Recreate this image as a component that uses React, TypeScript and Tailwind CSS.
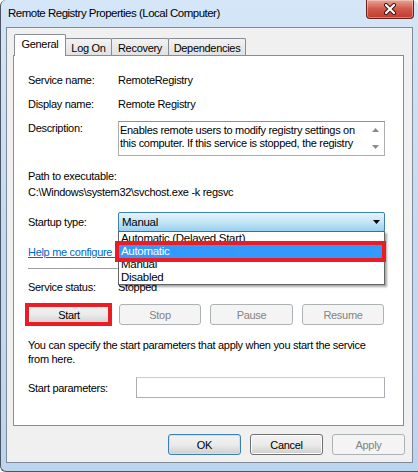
import React from "react";

const body = { fontFamily: '"Liberation Sans", Arial, sans-serif' };

function Btn({ label, w = "w-[82px]", disabled = false, focus = false }: { label: string; w?: string; disabled?: boolean; focus?: boolean }) {
  const base = "flex h-[21px] items-center justify-center rounded-[3px] border text-[11px]";
  if (disabled) {
    return <div className={`${base} ${w} border-[#adb2b5] bg-[#f4f4f4] text-[#838383]`}>{label}</div>;
  }
  return (
    <div
      className={`${base} ${w} ${
        focus ? "border-[#3c7fb1] shadow-[inset_0_0_0_1px_#bde6fd]" : "border-[#707070] shadow-[inset_0_0_0_1px_#fcfcfc]"
      } bg-gradient-to-b from-[#f2f2f2] via-[#ebebeb] to-[#cfcfcf] text-black`}
    >
      {label}
    </div>
  );
}

function Row({ label, children, className = "" }: { label: string; children: React.ReactNode; className?: string }) {
  return (
    <div className={`flex ${className}`}>
      <div className="w-[90px] shrink-0">{label}</div>
      <div className="flex-1">{children}</div>
    </div>
  );
}

export default function App() {
  const tabs = [
    ["Log On", "w-[47px]"],
    ["Recovery", "w-[58px]"],
    ["Dependencies", "w-[78px]"],
  ];

  return (
    <div
      className="flex h-[472px] w-[418px] flex-col overflow-hidden rounded-t-[6px] rounded-bl-[6px] border-b border-l border-[#4b5563] bg-gradient-to-b from-[#d4e6f7] via-[#c3daf2] to-[#bcd5ee]"
      style={body}
    >
      {/* title bar */}
      <div className="flex h-[27px] shrink-0 items-start justify-between">
        <div className="pl-[7px] pt-[5px] text-[11.5px] leading-[16px] tracking-[-0.5px] text-black">
          Remote Registry Properties (Local Computer)
        </div>
        <div className="mr-[4px] flex h-[19px] w-[48px] items-center justify-center rounded-b-[4px] border border-t-0 border-[#6b2020] bg-gradient-to-b from-[#e8a493] via-[#d0584a] to-[#c03a2b] shadow-[inset_0_0_0_1px_rgba(255,255,255,0.35)]">
          <svg width="14" height="12" viewBox="0 0 14 12">
            <path d="M3 2 L11 10 M11 2 L3 10" stroke="#3a1010" strokeWidth="4" strokeLinecap="round" />
            <path d="M3 2 L11 10 M11 2 L3 10" stroke="#ffffff" strokeWidth="2.2" strokeLinecap="round" />
          </svg>
        </div>
      </div>

      {/* client area */}
      <div className="mx-[5px] mb-[8px] flex flex-1 flex-col border border-[#7e8a98] bg-[#f0f0f0] text-[11px] leading-[14px] tracking-[-0.3px] text-black">
        {/* tabs */}
        <div className="ml-[7px] mt-[6px] flex h-[22px] items-end">
          <div className="relative z-10 flex h-[22px] w-[52px] items-start justify-center rounded-t-[2px] border border-b-0 border-[#898c95] bg-white pt-[2px]">
            General
          </div>
          {tabs.map(([t, w]) => (
            <div
              key={t}
              className={`-ml-px flex h-[18px] ${w} items-start justify-center rounded-t-[2px] border border-b-0 border-[#898c95] bg-gradient-to-b from-[#f2f2f2] to-[#e0e0e0] pt-[2px]`}
            >
              {t}
            </div>
          ))}
        </div>

        {/* panel */}
        <div className="relative ml-[6px] -mt-px flex h-[371px] w-[391px] flex-col border border-[#898c95] bg-white pl-[14px] pr-[18px]">
          <Row label="Service name:" className="mt-[17px]">RemoteRegistry</Row>
          <Row label="Display name:" className="mt-[10px]">Remote Registry</Row>

          <Row label="Description:" className="mt-[10px]">
            <div className="flex h-[35px] w-[267px] overflow-hidden border border-[#abadb3] border-t-[#8e8f8f] bg-white">
              <div className="flex-1 pl-[1px] pt-[2px] leading-[13px]">
                Enables remote users to modify registry settings on this computer. If this service is stopped, the registry
              </div>
              <div className="flex w-[17px] shrink-0 flex-col items-center justify-between py-[6px]">
                <svg width="7" height="4" viewBox="0 0 7 4"><path d="M0 4 L3.5 0 L7 4 Z" fill="#8a8a8a" /></svg>
                <svg width="7" height="4" viewBox="0 0 7 4"><path d="M0 0 L3.5 4 L7 0 Z" fill="#8a8a8a" /></svg>
              </div>
            </div>
          </Row>

          <div className="mt-[13px]">Path to executable:</div>
          <div className="mt-[2px]">C:\Windows\system32\svchost.exe -k regsvc</div>

          {/* startup type */}
          <div className="relative z-20 mt-[13px] flex items-center">
            <div className="w-[90px] shrink-0">Startup type:</div>
            <div className="relative">
              <div className="flex h-[20px] w-[267px] items-center justify-between rounded-[2px] border border-[#3c7fb1] bg-gradient-to-b from-[#e5f4fc] via-[#c4e5f6] to-[#98d1ef] pl-[3px] pr-[4px] text-[11.5px]">
                <span>Manual</span>
                <svg width="7" height="4" viewBox="0 0 7 4"><path d="M0 0 L7 0 L3.5 4 Z" fill="#000" /></svg>
              </div>
              {/* dropdown list */}
              <div className="absolute left-0 top-[19px] w-[267px] border border-[#646464] bg-white text-[11.5px] leading-[13px] shadow-[2px_2px_2px_rgba(0,0,0,0.35)]">
                <div className="h-[13px] pl-[2px]">Automatic (Delayed Start)</div>
                <div className="h-[13px] bg-[#3399ff] pl-[2px] text-white">Automatic</div>
                <div className="h-[13px] pl-[2px]">Manual</div>
                <div className="h-[13px] pl-[2px]">Disabled</div>
                <div className="pointer-events-none absolute left-[-4px] right-[-2px] top-[9px] h-[21px] border-[4px] border-[#ed1c24]" />
              </div>
            </div>
          </div>

          <div className="mt-[13px] whitespace-nowrap text-[#0066cc] underline">Help me configure service recovery options.</div>
          <div className="mt-[9px] h-px w-[356px] bg-[#a0a0a0]" />

          <Row label="Service status:" className="mt-[11px]">Stopped</Row>

          {/* service buttons */}
          <div className="mt-[10px] flex gap-[9px]">
            <div className="relative">
              <Btn label="Start" />
              <div className="absolute bottom-[-1px] left-[-3px] right-[-2px] top-[-1px] border-[4px] border-[#ed1c24]" />
            </div>
            <Btn label="Stop" disabled />
            <Btn label="Pause" disabled w="w-[83px]" />
            <Btn label="Resume" disabled />
          </div>

          <div className="mt-[13px]">
            You can specify the start parameters that apply when you start the service
            <br />
            from here.
          </div>

          <div className="mt-[11px] flex items-center">
            <div className="w-[108px] shrink-0">Start parameters:</div>
            <div className="h-[21px] w-[249px] border border-[#abadb3] border-t-[#c9cacb] bg-white" />
          </div>
        </div>

        {/* dialog buttons */}
        <div className="mt-[8px] flex justify-end gap-[9px] pr-[7px]">
          <Btn label="OK" w="w-[73px]" focus />
          <Btn label="Cancel" w="w-[73px]" />
          <Btn label="Apply" w="w-[73px]" disabled />
        </div>
      </div>
    </div>
  );
}
